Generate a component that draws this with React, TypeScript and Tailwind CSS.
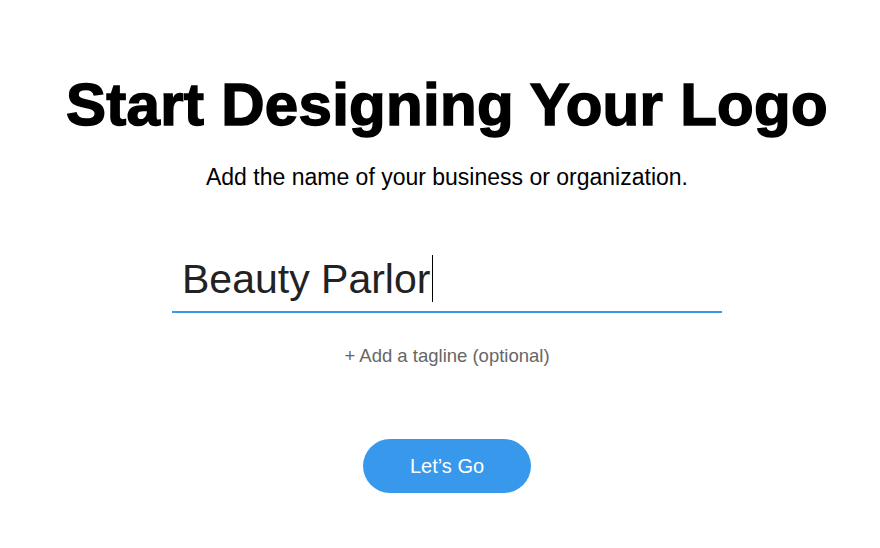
import React from "react";

export default function App() {
  return (
    <div className="w-[880px] h-[548px] bg-white flex flex-col items-center pl-[14px]" style={{ fontFamily: '"Liberation Sans", Arial, sans-serif' }}>
      <h1 className="mt-[70px] text-[60px] leading-[70px] font-bold text-black tracking-[0.3px] [-webkit-text-stroke:1.5px_black]">Start Designing Your Logo</h1>
      <p className="mt-[23px] text-[23px] leading-[28px] text-black">Add the name of your business or organization.</p>
      <div className="mt-[63px] w-[550px] border-b-2 border-[#3899ec] flex items-end pl-[10px] pb-[7px]">
        <span className="text-[41px] leading-[50px] text-[#222222]">Beauty Parlor</span>
        <span className="w-px h-[47px] bg-black ml-[2px] mb-[2px]" />
      </div>
      <p className="mt-[32px] text-[18.5px] leading-[22px] text-[#666666]">+ Add a tagline (optional)</p>
      <button className="mt-[72px] w-[168px] h-[54px] rounded-full bg-[#3899ec] text-white text-[20px]">Let’s Go</button>
    </div>
  );
}
